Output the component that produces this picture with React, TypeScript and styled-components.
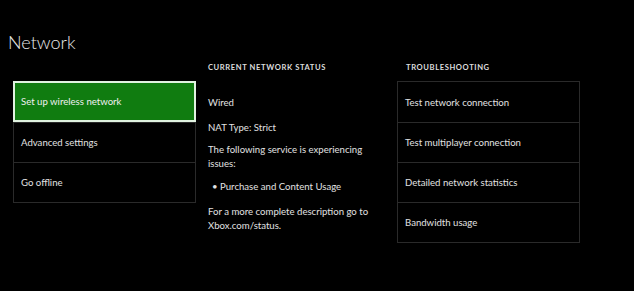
import React from "react";
import styled, { createGlobalStyle } from "styled-components";

const Global = createGlobalStyle`
  html, body { margin: 0; padding: 0; background: #000; }
  body { font-family: "Lato", "Open Sans", sans-serif; color: #e6e6e6; }
  #root { width: 634px; height: 291px; background: #000; overflow: hidden; }
`;

const Page = styled.div`
  padding: 31px 0 0 8px;
`;

const Title = styled.h1`
  margin: 0;
  font-size: 18px;
  font-weight: 300;
  line-height: 23px;
  color: #e8e8e8;
`;

const Columns = styled.div`
  display: grid;
  grid-template-columns: 183px 177px 183px;
  column-gap: 12px;
  margin: 8px 0 0 5px;
`;

const Column = styled.section`
  display: flex;
  flex-direction: column;
`;

const Header = styled.div`
  height: 19px;
  font-size: 7.6px;
  font-weight: 700;
  letter-spacing: 0.6px;
  line-height: 11px;
  color: #dcdcdc;
  text-transform: uppercase;
`;

const HeaderText = styled.span<{ $indent: number }>`
  padding-left: ${(p) => p.$indent}px;
`;

const List = styled.div`
  border: 1px solid #2a2a2a;
  display: flex;
  flex-direction: column;
`;

const Item = styled.div<{ $active?: boolean }>`
  height: 40px;
  box-sizing: border-box;
  display: flex;
  align-items: center;
  padding-left: ${(p) => (p.$active ? 6 : 7)}px;
  font-size: 9.6px;
  color: #e2e2e2;
  border-top: 1px solid #2a2a2a;
  &:first-child {
    border-top: none;
  }
  ${(p) =>
    p.$active &&
    `
    background: #107c10;
    border: 2px solid #e0f2e0 !important;
    margin: -1px -1px 0 -1px;
    height: 41px;
    color: #f0f0f0;
  `}
`;

const Status = styled.div`
  display: flex;
  flex-direction: column;
  padding-top: 15px;
  font-size: 9.6px;
  line-height: 14px;
  color: #e2e2e2;
`;

const Para = styled.p<{ $top: number }>`
  margin: ${(p) => p.$top}px 0 0 0;
`;

const Bullet = styled.p<{ $top: number }>`
  margin: ${(p) => p.$top}px 0 0 4px;
`;

export default function App() {
  return (
    <>
      <Global />
      <Page>
        <Title>Network</Title>
        <Columns>
          <Column>
            <Header />
            <List>
              <Item $active>Set up wireless network</Item>
              <Item>Advanced settings</Item>
              <Item>Go offline</Item>
            </List>
          </Column>
          <Column>
            <Header>
              <HeaderText $indent={0}>Current network status</HeaderText>
            </Header>
            <Status>
              <Para $top={0}>Wired</Para>
              <Para $top={11}>NAT Type: Strict</Para>
              <Para $top={8}>
                The following service is experiencing
                <br />
                issues:
              </Para>
              <Bullet $top={9}>• Purchase and Content Usage</Bullet>
              <Para $top={11}>
                For a more complete description go to
                <br />
                Xbox.com/status.
              </Para>
            </Status>
          </Column>
          <Column>
            <Header>
              <HeaderText $indent={9}>Troubleshooting</HeaderText>
            </Header>
            <List>
              <Item>Test network connection</Item>
              <Item>Test multiplayer connection</Item>
              <Item>Detailed network statistics</Item>
              <Item>Bandwidth usage</Item>
            </List>
          </Column>
        </Columns>
      </Page>
    </>
  );
}
